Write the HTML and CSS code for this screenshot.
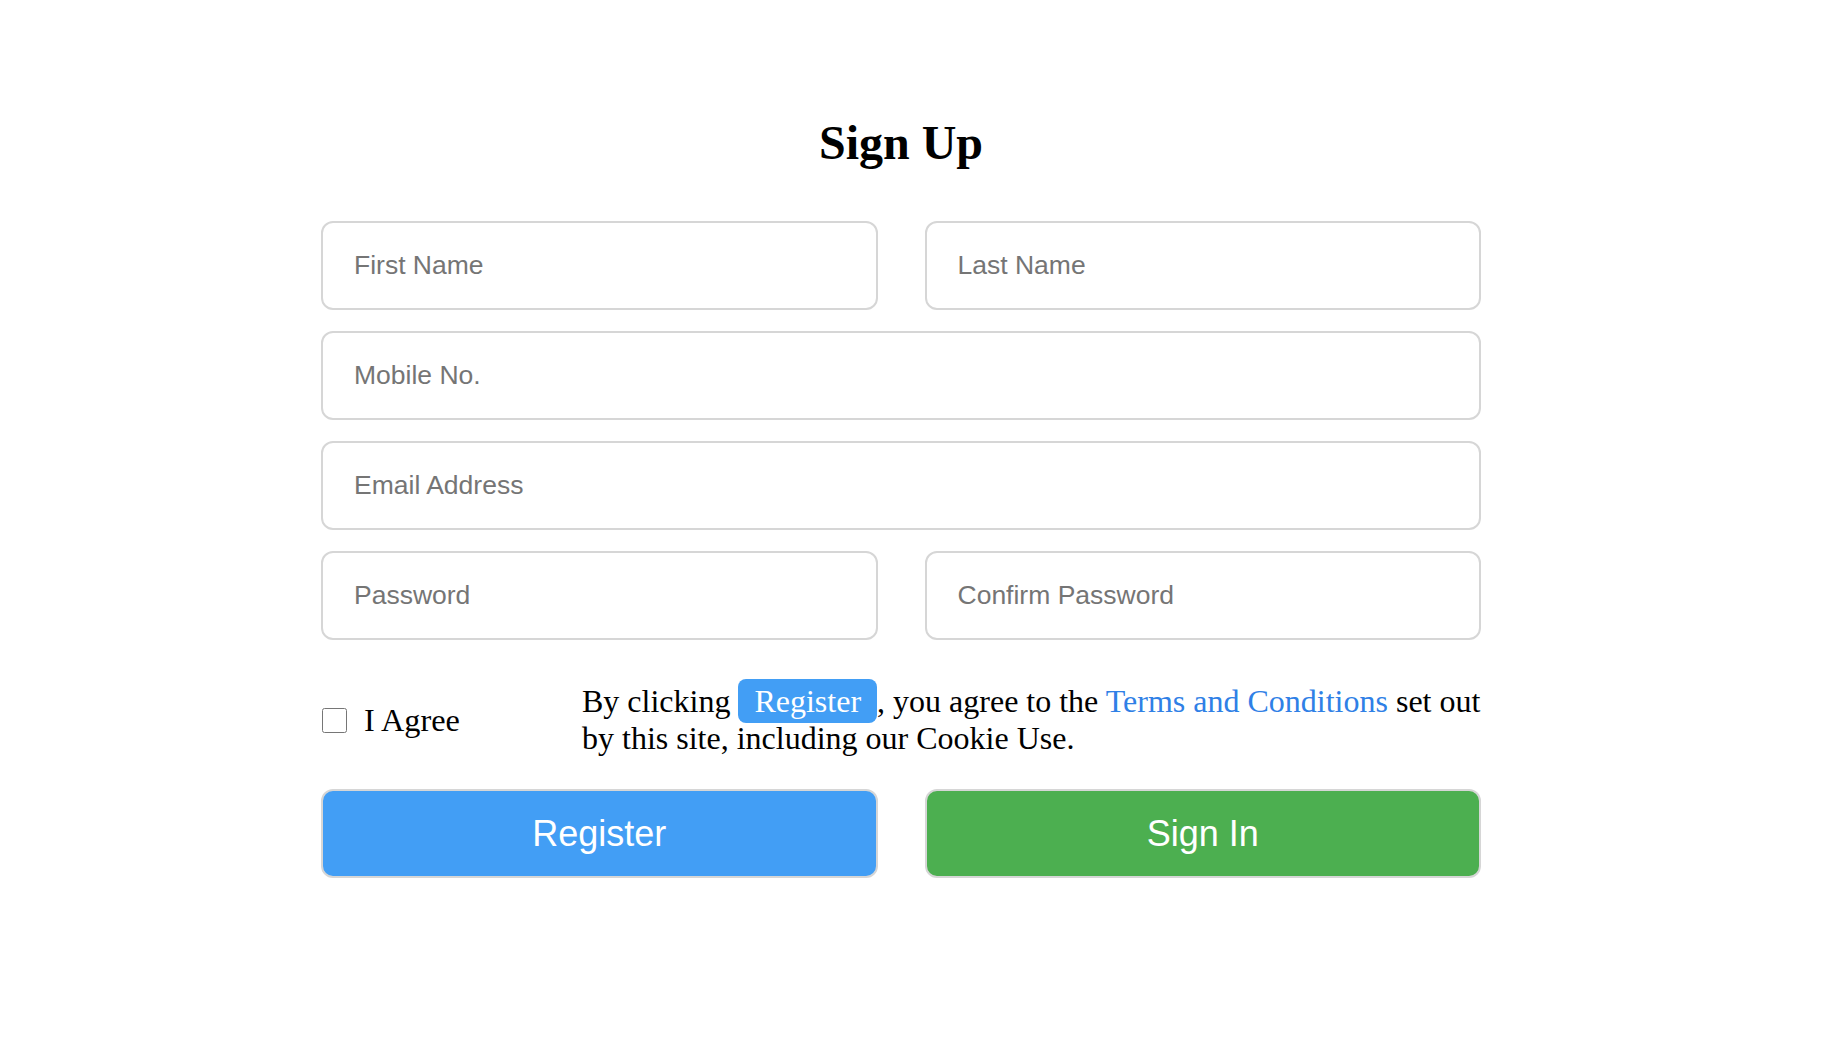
FILE: index.html
```html
<!DOCTYPE html>
<html lang="en">
<head>
<meta charset="utf-8">
<title>Sign Up</title>
<link rel="stylesheet" href="styles.css">
</head>
<body>
<div class="page">
  <form class="signup">
    <h1 class="title">Sign Up</h1>
    <div class="row two">
      <input class="field" type="text" placeholder="First Name">
      <input class="field" type="text" placeholder="Last Name">
    </div>
    <div class="row">
      <input class="field" type="text" placeholder="Mobile No.">
    </div>
    <div class="row">
      <input class="field" type="email" placeholder="Email Address">
    </div>
    <div class="row two">
      <input class="field" type="password" placeholder="Password">
      <input class="field" type="password" placeholder="Confirm Password">
    </div>
    <div class="agree-row">
      <label class="agree"><input class="check" type="checkbox"><span>I Agree</span></label>
      <p class="terms">By clicking <span class="badge">Register</span>, you agree to the <a class="link" href="#">Terms and Conditions</a> set out by this site, including our Cookie Use.</p>
    </div>
    <div class="row two buttons">
      <button class="btn btn-register" type="button">Register</button>
      <button class="btn btn-signin" type="button">Sign In</button>
    </div>
  </form>
</div>
</body>
</html>
```

FILE: styles.css
```css
html, body {
  margin: 0;
  padding: 0;
  background: #ffffff;
}

.page {
  padding: 115px 22px 0 0;
}

.signup {
  width: 1160px;
  margin: 0 auto;
  display: flex;
  flex-direction: column;
  gap: 21px;
  font-family: "Liberation Serif", "Times New Roman", serif;
}

.title {
  margin: 0 0 30px;
  font-family: "Liberation Serif", "Times New Roman", serif;
  font-size: 48px;
  line-height: 55px;
  font-weight: bold;
  text-align: center;
  color: #000;
}

.row {
  display: flex;
  gap: 47px;
}

.field {
  flex: 1;
  min-width: 0;
  box-sizing: border-box;
  height: 89px;
  margin: 0;
  padding: 0 31px;
  border: 2px solid #d6d6d6;
  border-radius: 12px;
  background: #fff;
  font-family: "Liberation Sans", Arial, sans-serif;
  font-size: 26.5px;
  color: #333;
  outline: none;
}

.field::placeholder {
  color: #757575;
  opacity: 1;
}

.agree-row {
  display: flex;
  align-items: center;
  gap: 47px;
  margin-top: 22px;
}

.agree {
  width: 214px;
  flex: none;
  display: flex;
  align-items: center;
  gap: 17px;
  font-size: 32.3px;
  line-height: 37px;
  color: #000;
}

.check {
  width: 25px;
  height: 25px;
  margin: 0 0 0 1px;
}

.terms {
  flex: 1;
  margin: 0;
  font-size: 32px;
  line-height: 37px;
  color: #000;
}

.badge {
  background: #429ef5;
  color: #fff;
  padding: 4px 16px;
  border-radius: 8px;
}

.link {
  color: #2f80e6;
  text-decoration: none;
}

.buttons {
  margin-top: 11px;
}

.btn {
  flex: 1;
  height: 89px;
  box-sizing: border-box;
  margin: 0;
  border: 2px solid #d6d6d6;
  border-radius: 12px;
  font-family: "Liberation Sans", Arial, sans-serif;
  font-size: 36px;
  color: #fff;
  cursor: pointer;
}

.btn-register {
  background: #429ef5;
}

.btn-signin {
  background: #4caf50;
}
```
